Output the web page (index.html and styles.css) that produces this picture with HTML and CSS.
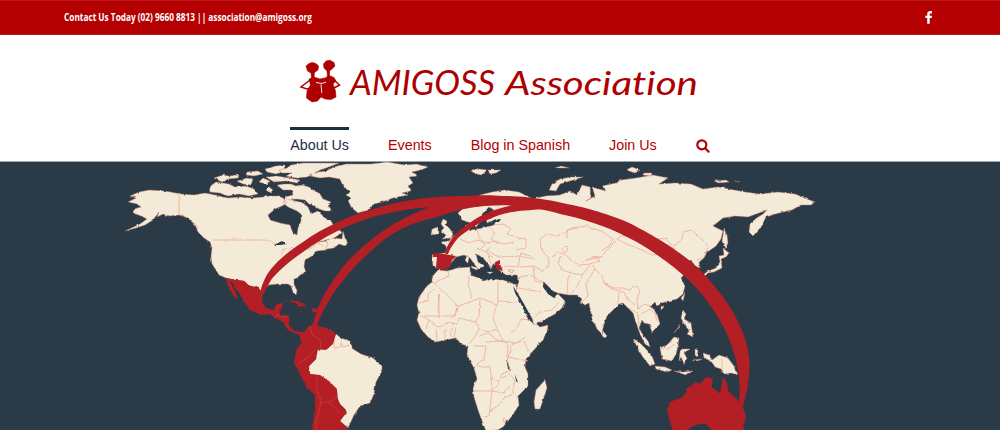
FILE: index.html
```
<!DOCTYPE html>
<html lang="en">
<head>
<meta charset="utf-8">
<title>AMIGOSS Association</title>
<link rel="stylesheet" href="styles.css">
</head>
<body>
<div class="topbar">
  <svg class="contact" width="260" height="20" viewBox="0 0 260 20"><text x="0" y="13" textLength="248" lengthAdjust="spacingAndGlyphs">Contact Us Today (02) 9660 8813 || association@amigoss.org</text></svg>
  <a class="social" aria-label="Facebook"><svg width="8" height="13" viewBox="0 0 8 13"><path d="M7 .2V2.500H5.700C4.800 2.500 4.700 2.900 4.700 3.500V4.700H7L6.700 7H4.700V12.800H2.200V7H.4V4.700H2.200V3.100C2.200 1.100 3.400.1 5.200.1Z"/></svg></a>
</div>
<header class="header">
  <svg class="logo" width="410" height="50" viewBox="295 55 410 50">
    <g class="logo-mark">
      <path d="M306 66L309 63.500L312 62.500L316 63.500L318.500 66L318 70L314.500 72.500L314 78L311.500 78L311 73L307.500 71Z"/>
      <path d="M323.500 64L326 61L330 60.300L334 62.500L335 66L332 69L329.500 71V78H327.500L327 71L324 68Z"/>
      <path d="M309 79L314 77L320 79L325 78L329 75.500L334 77.500L336 81L333 84L335.500 91L336 97L331 99.500L325 99L321 97L317.500 101L312 102L306.500 98L307 91L310.500 85Z"/>
      <path class="limb" d="M310 80L301 87L307 89L311 88M332 78L339.500 85L334 88"/>
      <path class="cut" d="M316 82.500L322 83.500L326 82M321 84.500L321.800 93M307 86L309.500 84M334.500 84.500L336 84"/>
    </g>
    <text class="logo-text" x="350" y="94.500" textLength="145" lengthAdjust="spacingAndGlyphs">AMIGOSS</text>
    <text class="logo-text logo-word" x="505" y="94.500" textLength="193" lengthAdjust="spacingAndGlyphs">Association</text>
  </svg>
  <nav class="nav">
    <a class="item active">About Us</a>
    <a class="item">Events</a>
    <a class="item">Blog in Spanish</a>
    <a class="item">Join Us</a>
    <a class="item search" aria-label="Search"><svg width="14" height="14" viewBox="0 0 14 14"><circle cx="5.800" cy="5.800" r="4.500"/><path d="M9.200 9.200L12.600 12.700"/></svg></a>
  </nav>
</header>
<main class="hero">
<svg class="map" width="1000" height="268" viewBox="0 162 1000 268">
  <defs>
    <filter id="coast" x="0" y="0" width="100%" height="100%" color-interpolation-filters="sRGB">
      <feTurbulence type="fractalNoise" baseFrequency=".22" numOctaves="2" seed="4"/>
      <feDisplacementMap in="SourceGraphic" scale="2.400" xChannelSelector="R" yChannelSelector="G"/>
    </filter>
  </defs>
  <g filter="url(#coast)">
  <g class="land">
    <!-- North America -->
    <path d="M130 196L139 192L149 190L165 191L181 194L194 195L205 193L215 195L228 198L240 197L252 198L263 197L270 196L278 196L283 198L287 203L282 206L275 209L268 215L270 220L280 223L290 225L293 233L297 235L298 228L301 221L301 214L297 211L288 207L283 203L286 196L292 200L303 203L308 207L311 214L318 211L325 218L331 221L334 226L340 230L342 233L334 238L326 240L318 242L327 241L329 245L325 250L317 251L312 256L305 260L304 267L306 271L299 276L294 280L294 284L297 291L296 295L293 292L291 286L288 284L277 284L269 285L265 288L263 294L257 291L253 287L248 286L244 281L236 280L226 278L219 275L216 270L212 264L211 256L212 248L210 242L204 238L198 232L195 225L188 218L179 215L169 216L163 214L157 217L159 212L153 220L145 225L136 228L125 231L140 224L147 219L141 216L133 213L134 209L141 207L137 204L128 202L136 198Z"/>
    <path d="M326 240L334 238L342 239L343 231L345 238L348 242L345 246L339 244L334 248L327 249L324 251L328 244Z"/>
    <!-- Arctic islands -->
    <path d="M209 187L216 182L223 183L229 184L235 187L246 186L254 189L258 194L249 196L239 194L228 196L219 193L210 192Z"/>
    <path d="M214 178L223 175L229 176L239 175L238 178L228 179L222 182Z"/>
    <path d="M237 181L247 178L253 179L251 185L243 184ZM259 182L263 178L270 181L266 184ZM266 190L269 187L273 190L270 193Z"/>
    <path d="M265 169L276 166L284 165L285 171L276 174L267 172ZM247 172L258 171L263 174L254 176L246 175ZM266 177L277 176L289 178L300 180L297 183L286 181L274 182Z"/>
    <path d="M279 170L287 168L291 165L303 163L322 163H339L329 167L320 170L314 174L307 177L296 178L286 176L292 173L282 173Z"/>
    <path d="M277 185L284 184L291 184L296 186L302 185L309 187L313 190L320 194L323 199L331 202L328 205L332 211L325 211L319 209L315 206L309 204L305 200L296 199L289 200L285 197L293 195L292 190L283 190Z"/>
    <!-- Greenland -->
    <path d="M310 176L318 172L326 171L334 167L346 164H371L387 162L405 165L416 164L428 167L421 170L412 172L417 176L409 177L413 183L408 186L411 191L402 193L408 195L393 198L382 202L374 204L369 210L358 213L352 208L348 201L351 198L346 195L350 191L343 186L340 179L329 177L320 178Z"/>
    <!-- South America -->
    <path d="M331 342L336 334L341 338L350 341L353 349L361 354L373 358L382 366V371L376 382L374 394L370 403L360 406L354 415L348 428L340 421L346 410L338 402L337 391L328 382L320 376L310 374L308 367L316 359V350L325 349Z"/>
    <!-- Africa -->
    <path d="M438 270L448 271L457 268L470 267V275L479 278L483 281L491 279L503 280L512 283L516 286L521 295L526 307L533 321L540 327L548 325L547 332L542 341L533 351L526 359L525 367L528 374L528 386L518 396L519 405L512 416L503 427L495 431H486L482 421L478 410L474 397L473 388L477 379L474 368L470 361L467 354L468 346L461 344L456 338L445 340L436 342L428 337L421 329L417 320L419 313L417 305L419 297L427 286L432 282V277Z"/>
    <path d="M545 380L547 388L543 400L540 409L535 409L534 402L536 390Z"/>
    <!-- Eurasia -->
    <path d="M432 255L444 253L447 251L446 246L441 242L449 241L452 237L459 233L466 231L465 226L469 224L470 230L478 229L486 227L494 225L497 219L487 223L486 217L494 210L489 207L482 214L482 220L476 227L471 223L462 220L458 213L464 207L473 201L480 195L492 192L505 190L519 192L533 199L545 196L560 195L570 191L577 195L582 185L590 187L591 198L586 201L595 196L592 187L606 191L602 186L616 183L621 180L636 178L653 175L668 178L659 184L675 183L691 184L703 189L718 187L729 189L745 192L760 194L778 192L795 194L807 199L815 202L811 205L801 205L792 210L779 213L766 217L761 227L753 236L749 232L750 224L755 219L763 214L767 210L759 213L748 217L735 216L723 218L713 226L723 231L721 239L716 246L706 253L704 258L699 262L700 268L695 266L691 260L685 263L688 270L681 278L685 286L683 294L677 299L669 301L662 303L657 306L655 302L651 306L657 314L660 324L652 332L649 324L644 323L642 320L639 328L643 335L648 341L650 347L645 344L641 336L637 326L633 313L629 309L623 303L619 304L613 310L607 316L604 324L602 334L597 329L592 318L589 303L585 305L580 303L582 299L577 295H569L557 293L553 291L546 284L543 283L545 289L550 294L557 293L565 301L562 308L555 314L544 320L534 325L532 318L524 305L516 290L519 282L517 275L506 275L499 270L498 263L493 264L491 269L486 261L480 256L476 254L478 262L484 266L478 269L475 265L470 258L464 255L456 257L452 262L448 267L439 269L433 266Z"/>
    <path d="M443 219L447 221L446 225L450 229L453 234L451 238L443 239L446 235L441 231L444 228L441 224ZM432 229L438 227L438 234L431 235Z"/>
    <path d="M549 190L552 184L560 179L571 177L583 177L570 181L560 184L556 191ZM471 171L479 169L487 170L482 175L476 174ZM488 170L501 170L496 173L490 174ZM555 168L561 166L569 168ZM626 170L632 167L640 170L635 173ZM643 173L652 173L651 176L643 175ZM714 181L726 180L729 182L719 183ZM735 181L740 182Z"/>
    <path d="M724 229L727 235L728 243L725 249L722 241ZM723 248L729 253L726 257L721 259L722 268L714 272L708 273L704 277L703 275L708 271L716 268L720 262L719 256L724 255ZM467 255L469 258L468 263L465 261ZM471 266L478 268L477 270L472 268ZM508 271L514 270L512 273ZM487 272L493 272L490 274Z"/>
    <!-- South-east Asia and the Pacific -->
    <path d="M685 293L683 301L681 298ZM603 331L607 336L605 338L602 336ZM661 306L664 307L661 310ZM683 310L686 314L684 319L691 323L693 337L687 334L690 330L684 324L681 318ZM680 325L674 333L679 327ZM633 339L638 341L645 348L652 356L655 364L650 366L642 356ZM660 348L668 344L674 337L679 338L678 346L676 354L672 361L662 359ZM655 366L665 367L672 370L667 372L656 369ZM682 349L690 349L684 353L687 358L684 364L681 357L679 361L680 351ZM674 371L683 372L693 371L686 375ZM695 349L698 350L697 357L695 355ZM692 360L703 359L697 361ZM703 353L709 355L712 360L719 355L728 358L734 366L738 375L731 373L725 374L721 369L715 367L711 361L704 358Z"/>
  </g>
  <!-- Inland seas and lakes -->
  <path class="sea" d="M513 286L518 294L524 304L532 319L534 324L528 319L520 302L515 293ZM543 284L549 291L558 293L554 298L548 294L543 287ZM274 245L282 241L287 244L280 245ZM506 358L511 371L508 369ZM515 374L518 383L516 381ZM493 220L501 219L499 222H493Z"/>
  <!-- Frontiers -->
  <path class="borders" d="M179 194V214L188 218L193 222L199 228M213 240H266L276 244M287 248L282 251V257M288 250L292 248L295 252L292 257M299 249H310L317 243L324 246M434 283L458 306L473 301L480 298L493 303L497 306M458 306L457 311L451 319M438 313L439 294V297M419 303L428 301V294L434 289M434 283L449 276L448 271M470 271L468 284L471 293V299M498 281V301L517 302M498 301L493 318L497 329L503 341L516 343L526 337M458 308L456 316L441 316H424M439 294V317M420 315L429 320L437 327L442 326L448 322L457 324L459 318L475 322L479 316L480 300M429 320L426 329M436 329L437 341M445 329V340M453 323L451 337M456 327L454 338M476 321L479 329L474 338L469 344M479 329L489 332L497 329M479 336L488 333L497 340L503 342M474 346H486L484 359L477 364M486 342L503 341L508 344L507 357L510 371L502 374L499 382L491 377L490 367H482L476 365M473 391H492L501 382M491 377L492 391L489 416L484 417M492 391L503 393L510 386M489 411L498 406L505 397L512 395M504 418L507 421L503 422ZM502 378L510 374L515 381L512 394M508 357L528 361M508 357L513 343M524 341L529 352M511 333L517 328L521 319L530 320M517 278L530 275L536 278L547 284M519 288L529 290L541 292M532 319L540 312L552 310L560 301M460 239L469 243L477 240L487 243L495 241L504 244L514 242M477 228L479 238L485 245L480 249M490 227L495 233L491 239L498 244M494 225L504 224L511 229L507 234L519 238L526 239L526 248L516 250M490 247L486 252L493 258M477 249L487 252L491 264M487 250L498 257L520 256L534 259M504 266L521 267L533 266L541 270M518 266L521 253L533 257M533 266L535 281L542 283M541 272L549 266V258L544 253L541 248L540 239L547 234L558 236L568 231L571 228L586 226L601 231L613 239L609 246L601 251M567 238V230L578 228M552 257L558 252L566 255L572 261L579 265L590 264L600 260M562 249L566 246L568 250L564 253ZM561 256L558 263L562 269M560 269L571 273L568 278L567 295M571 273L582 275L590 265M583 275L577 286L571 294M590 263L595 268L592 274L586 284L588 296L581 303M595 269L602 276L605 284L612 289L624 292M602 282L613 288L623 288L629 290L637 286L640 291L637 299L638 309M619 292L618 303L623 305M624 292L627 299L634 304L639 309L643 304L652 306M629 309L638 313L639 324M641 314L650 309L655 314L657 321M617 239L626 244L640 249L652 255L662 254L671 247L675 249L669 242L665 238L655 240L641 237L621 236L617 239M674 246L682 239L683 232L692 230L698 236L705 242L708 247L705 256L697 260M616 241L605 252L600 258L586 260M582 263L590 258L601 257M334 340V348L340 347L343 341M342 340V347L350 345M722 358V373M660 348L668 349L675 344"/>
  <!-- Member countries -->
  <g class="member">
    <path d="M226 278L236 280L244 281L252 287L257 286L263 293L262 302L266 308L273 310L277 304L283 303L281 309L279 314L289 316L289 325L294 331L301 332V336L294 333L288 330L283 322L276 318L269 314L261 315L249 309L246 304L240 294L234 287L233 283L230 281L238 299L234 297L228 286Z"/>
    <path d="M286 301L293 300L302 303L307 306L299 307L296 303ZM300 311L303 311L302 313ZM312 308L318 309L317 312L312 312ZM299 332L304 332L309 326L315 324L319 326L330 329L336 334L333 344L326 350L318 349L316 359L309 366L310 374L320 375L329 381L337 389V397L341 406L347 412L340 421L348 430H312L315 409V395L307 388L302 378L294 363L296 351L301 343Z"/>
    <path d="M433 253L444 254L456 256L452 261L450 267L446 269L439 270L436 267L437 257H433ZM495 262L500 260V264L503 271L496 269Z"/>
    <path d="M670 402L683 397L688 388L696 382L700 384L706 377L713 379L711 387L720 393L723 377L727 383L728 391L737 399L742 405L746 416L744 426L743 431H673L669 418L667 410Z"/>
  </g>
  </g>
  <path class="frontier" d="M274 318L278 314L280 317L287 317M310 326L312 335L320 340L321 349M315 350L307 358L299 363M317 375L317 390L321 401L319 412L316 422V430M321 403L332 401L337 397M329 402L340 413"/>
  <path class="sea" d="M686 431L693 426L699 424H706L711 429L714 431Z"/>
  <!-- Links between the communities -->
  <g class="arcs">
    <path d="M260 293C262 284 266 275 271 269C280 258 291 250 303 242C314 234 325 228 337 222.500C348 217 359 213 370 210C400 200 433 196 463 196C480 195 492 195 503 196C525 196 546 199 567 204C580 206 606 213 627 222C640 228 673 246 693 263.500C705 274 713 284 723 297C735 313 749 338 749.500 364C749.500 378 747 392 743 407L739 402C741 387 739 368 733 350C729 337 720 318 707 301C699 290 687 278 683 275C674 267 667 262 660 257C649 249 638 242 627 237C606 226 581 218 560 214C548 210 530 207 513 205.500C500 205 485 206 475 207C452 206 443 206 433 207C412 208 390 212 370 218C347 225 325 236 303 252C291 260 279 270 271 280L264 293Z"/>
    <path d="M313 324C315 315 318 307 322 299C326 291 331 283 337 275C343 266 350 258 357 252C364 245 372 239 380 233C395 222 416 212 432 206L470 200L482 206C465 208 448 213 437 217C425 220 414 223 403 228C391 234 380 242 370 252C360 261 350 271 342 282C337 288 333 293 329 301C324 309 320 317 317 325Z"/>
    <path d="M445 254C446 248 449 242 453 237C457 232 462 228 467 225C472 221 478 217 483 215C492 210 503 207 513 205L548 209C534 210 524 210 513 212C505 213 497 215 490 219C483 221 477 224 472 228C467 231 462 234 458 238C454 243 450 248 448 254Z"/>
  </g>
</svg>
</main>
</body>
</html>
```
FILE: styles.css
```
* { box-sizing: border-box; }
body {
  margin: 0;
  width: 1000px;
  height: 430px;
  overflow: hidden;
  background: #fff;
  font-family: "Liberation Sans", Arial, sans-serif;
}
.topbar {
  display: flex;
  align-items: center;
  justify-content: space-between;
  height: 35px;
  padding: 0 67px 0 64px;
  background: #b40000;
  border-top: 1px solid #bd1717;
  border-bottom: 1px solid #bc1a1a;
  color: #fff;
}
.contact {
  display: block;
  overflow: visible;
  font: 700 10px "Open Sans", "Noto Sans", sans-serif;
  fill: #fff;
}
.social { display: flex; }
.social path { fill: #fff; }
.header {
  display: flex;
  flex-direction: column;
  align-items: center;
  justify-content: space-between;
  height: 127px;
  padding-top: 20px;
  border-bottom: 1px solid #9aa4aa;
}
.logo { display: block; }
.logo-mark { fill: #ad0000; stroke: #ad0000; stroke-width: .6; }
.logo-mark .limb { fill: none; stroke-width: 1.5; }
.logo-mark .cut { fill: none; stroke: #fff; stroke-width: .9; }
.logo-text {
  font: italic 400 34px Lato, sans-serif;
  font-variant-ligatures: none;
  fill: #ad0000;
}
.logo-word { font-size: 32px; }
.nav {
  display: flex;
  gap: 39px;
  height: 34px;
}
.item {
  padding-top: 7px;
  border-top: 3px solid transparent;
  font-size: 14.3px;
  line-height: 17px;
  color: #b40000;
  white-space: nowrap;
}
.active { color: #1d303d; border-color: #1d303d; }
.search { padding-top: 9px; }
.search svg { display: block; fill: none; stroke: #b40000; stroke-width: 2.2; stroke-linecap: round; }
.hero { height: 268px; background: #2a3b47; }
.map { display: block; }
.land { fill: #f3ebd8; stroke: #c77567; stroke-width: .45; }
.sea { fill: #2a3b47; }
.borders { fill: none; stroke: #eeaa98; stroke-width: .8; }
.member { fill: #b31f24; }
.frontier { fill: none; stroke: #d4382f; stroke-width: .8; }
.arcs { fill: #b31f24; }
```
